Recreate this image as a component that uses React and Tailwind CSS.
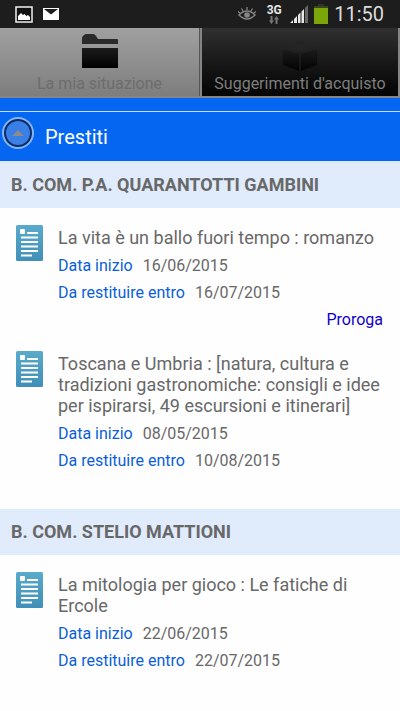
const sections = [
  {
    library: "B. COM. P.A. QUARANTOTTI GAMBINI",
    loans: [
      {
        title: "La vita è un ballo fuori tempo : romanzo",
        start: "16/06/2015",
        due: "16/07/2015",
        renewable: true,
      },
      {
        title:
          "Toscana e Umbria : [natura, cultura e tradizioni gastronomiche: consigli e idee per ispirarsi, 49 escursioni e itinerari]",
        start: "08/05/2015",
        due: "10/08/2015",
      },
    ],
  },
  {
    library: "B. COM. STELIO MATTIONI",
    loans: [
      {
        title: "La mitologia per gioco : Le fatiche di Ercole",
        start: "22/06/2015",
        due: "22/07/2015",
      },
    ],
  },
];

function StatusBar() {
  return (
    <div className="flex h-7 items-center justify-between bg-[#1d1d1d] pl-[15px] pr-4">
      <div className="flex items-center gap-[10px]">
        <svg width="18" height="17" viewBox="0 0 18 17">
          <rect x="1" y="1" width="16" height="15" fill="#111" stroke="#f2f2f2" strokeWidth="1.5" />
          <path d="M3 14v-4l3-3 2 2 1.500-1 2 2 1.500-1 2 2v3z" fill="#fff" />
        </svg>
        <svg width="16" height="12" viewBox="0 0 16 12">
          <rect width="16" height="12" fill="#fff" />
          <path d="M1 1h14L8 6.500z" fill="#1d1d1d" />
        </svg>
      </div>

      <div className="flex items-center">
        <svg className="mr-[10px]" width="18" height="14" viewBox="0 0 18 14" fill="none" stroke="#858585">
          <path d="M1 8q8-8 16 0q-8 8-16 0z" strokeWidth="1.500" />
          <circle cx="9" cy="8" r="2.800" fill="#858585" stroke="none" />
          <path d="M9 3V0M5 4L3.500 1.500M13 4l1.500-2.500M2 6L0 4.500M16 6l2-1.500" strokeWidth="1.300" />
        </svg>
        <div className="mr-2 flex w-4 flex-col items-center">
          <span className="text-xs leading-[11px] font-bold text-[#e6e6e6]">3G</span>
          <svg width="10" height="8" viewBox="0 0 10 8" fill="#777">
            <path d="M1.500 0h2v4.500H5L2.500 8 0 4.500h1.500z" />
            <path d="M6.500 8h2V3.500H10L7.500 0 5 3.500h1.500z" />
          </svg>
        </div>
        <svg className="mr-[5px]" width="19" height="18" viewBox="0 0 19 18">
          <path d="M0 18l3-3v3zM4 18v-4l3-3v7zM8 18v-8l2.500-2.500V18zM11.500 18V6.500L14 4v14z" fill="#e8e8e8" />
          <path d="M15 18V3l3-3v18z" fill="#666" />
        </svg>
        <svg className="mr-[6px]" width="14" height="20" viewBox="0 0 14 20">
          <rect x="4" y="0" width="6" height="3" fill="#30332c" />
          <rect y="2" width="14" height="3" fill="#36461a" />
          <rect y="4" width="14" height="16" fill="#7aa60a" />
        </svg>
        <span className="text-xl leading-7 text-[#dcdcdc]">11:50</span>
      </div>
    </div>
  );
}

function Tabs() {
  return (
    <nav className="grid h-[70px] grid-cols-2 border-b-2 border-[#858585] text-base leading-5">
      <button
        type="button"
        className="flex flex-col items-center justify-end border-r border-[#555] bg-linear-to-b from-[#a0a0a0] to-[#7e7e7e] pb-[2px] text-[#6d6d6d]"
      >
        <svg className="mb-[6px]" width="36" height="34" viewBox="0 0 36 34">
          <defs>
            <linearGradient id="folder" x1="0" y1="0" x2="0" y2="1">
              <stop offset="0" stopColor="#1c1c1c" />
              <stop offset="1" stopColor="#000" />
            </linearGradient>
          </defs>
          <path d="M0 10V4q0-1 1-2l1-1q1-1 3-1h6q2 0 3 2l2 3h19q1 0 1 1v4z" fill="#2a2a2a" />
          <rect y="14" width="36" height="20" fill="url(#folder)" />
        </svg>
        La mia situazione
      </button>
      <button
        type="button"
        className="flex flex-col items-center justify-end border-x-2 border-[#858585] bg-linear-to-b from-[#303030] to-[#050505] pb-[2px] text-[#7e7e7e]"
      >
        <svg className="mb-[3px]" width="34" height="32" viewBox="0 0 34 32">
          <defs>
            <linearGradient id="box" x1="0" y1="0" x2="0" y2="1">
              <stop offset="0" stopColor="#1c1c1c" />
              <stop offset="1" stopColor="#020202" />
            </linearGradient>
          </defs>
          <path d="M17 1L32 8 17 13 2 8z" fill="#242424" />
          <path d="M0 10l16 5v17L0 26z" fill="url(#box)" />
          <path d="M34 10l-16 5v17l16-6z" fill="url(#box)" />
        </svg>
        Suggerimenti d'acquisto
      </button>
    </nav>
  );
}

function DocumentIcon() {
  return (
    <svg className="shrink-0" width="27" height="36" viewBox="0 0 27 36">
      <defs>
        <linearGradient id="document" x1="0" y1="0" x2="0" y2="1">
          <stop offset="0" stopColor="#5aaacb" />
          <stop offset="1" stopColor="#3f8fb8" />
        </linearGradient>
      </defs>
      <rect width="27" height="36" rx="1.500" fill="url(#document)" />
      <rect x="4" y="4" width="5" height="5" rx="1" fill="#fff" />
      <path
        d="M11 8h11M5 12.500h17M5 17h17M5 21.500h17M5 26h17M5 30.500h11"
        stroke="#fff"
        strokeWidth="2.200"
      />
    </svg>
  );
}

function Loan({ loan }) {
  return (
    <li className="flex gap-[15px] pr-[17px] pl-4">
      <DocumentIcon />
      <div className="flex-1 pt-[2px]">
        <h3 className="mb-1 text-lg leading-[21px]">{loan.title}</h3>
        <dl className="text-base leading-[27px]">
          <div className="flex gap-[10px]">
            <dt className="text-[#0a5fd8]">Data inizio</dt>
            <dd>{loan.start}</dd>
          </div>
          <div className="flex gap-[10px]">
            <dt className="text-[#0a5fd8]">Da restituire entro</dt>
            <dd>{loan.due}</dd>
          </div>
        </dl>
        {loan.renewable && (
          <div className="text-right text-base leading-[27px]">
            <a href="#proroga" className="text-[#1100cc]">
              Proroga
            </a>
          </div>
        )}
      </div>
    </li>
  );
}

function App() {
  return (
    <div className="min-h-screen bg-[#fefefe] font-[Roboto,sans-serif] text-[#686868]">
      <StatusBar />
      <Tabs />

      <header className="border-b border-[#d5e6ff] bg-[#0566f2] pt-[13px]">
        <div className="flex h-[50px] items-center gap-[11px] border-t border-[#c4dcff] pl-[2px]">
          <button
            type="button"
            aria-label="Chiudi"
            className="flex size-8 -translate-y-1 items-center justify-center rounded-full border-2 border-[#86b5f5] bg-[#0b2c66] p-[2px]"
          >
            <span className="flex size-full items-center justify-center rounded-full bg-[#397fe6]">
              <svg width="12" height="6" viewBox="0 0 12 6">
                <path d="M6 0l6 6H0z" fill="#8c8c8c" />
              </svg>
            </span>
          </button>
          <h1 className="text-xl text-white">Prestiti</h1>
        </div>
      </header>

      <main>
        {sections.map((section) => (
          <section key={section.library} className="pb-[35px]">
            <h2 className="bg-[#e0ebfc] pl-[11px] text-lg leading-[46px] font-bold">
              {section.library}
            </h2>
            <ul className="flex flex-col gap-[18px] pt-[17px]">
              {section.loans.map((loan) => (
                <Loan key={loan.title} loan={loan} />
              ))}
            </ul>
          </section>
        ))}
      </main>
    </div>
  );
}

export default App;
